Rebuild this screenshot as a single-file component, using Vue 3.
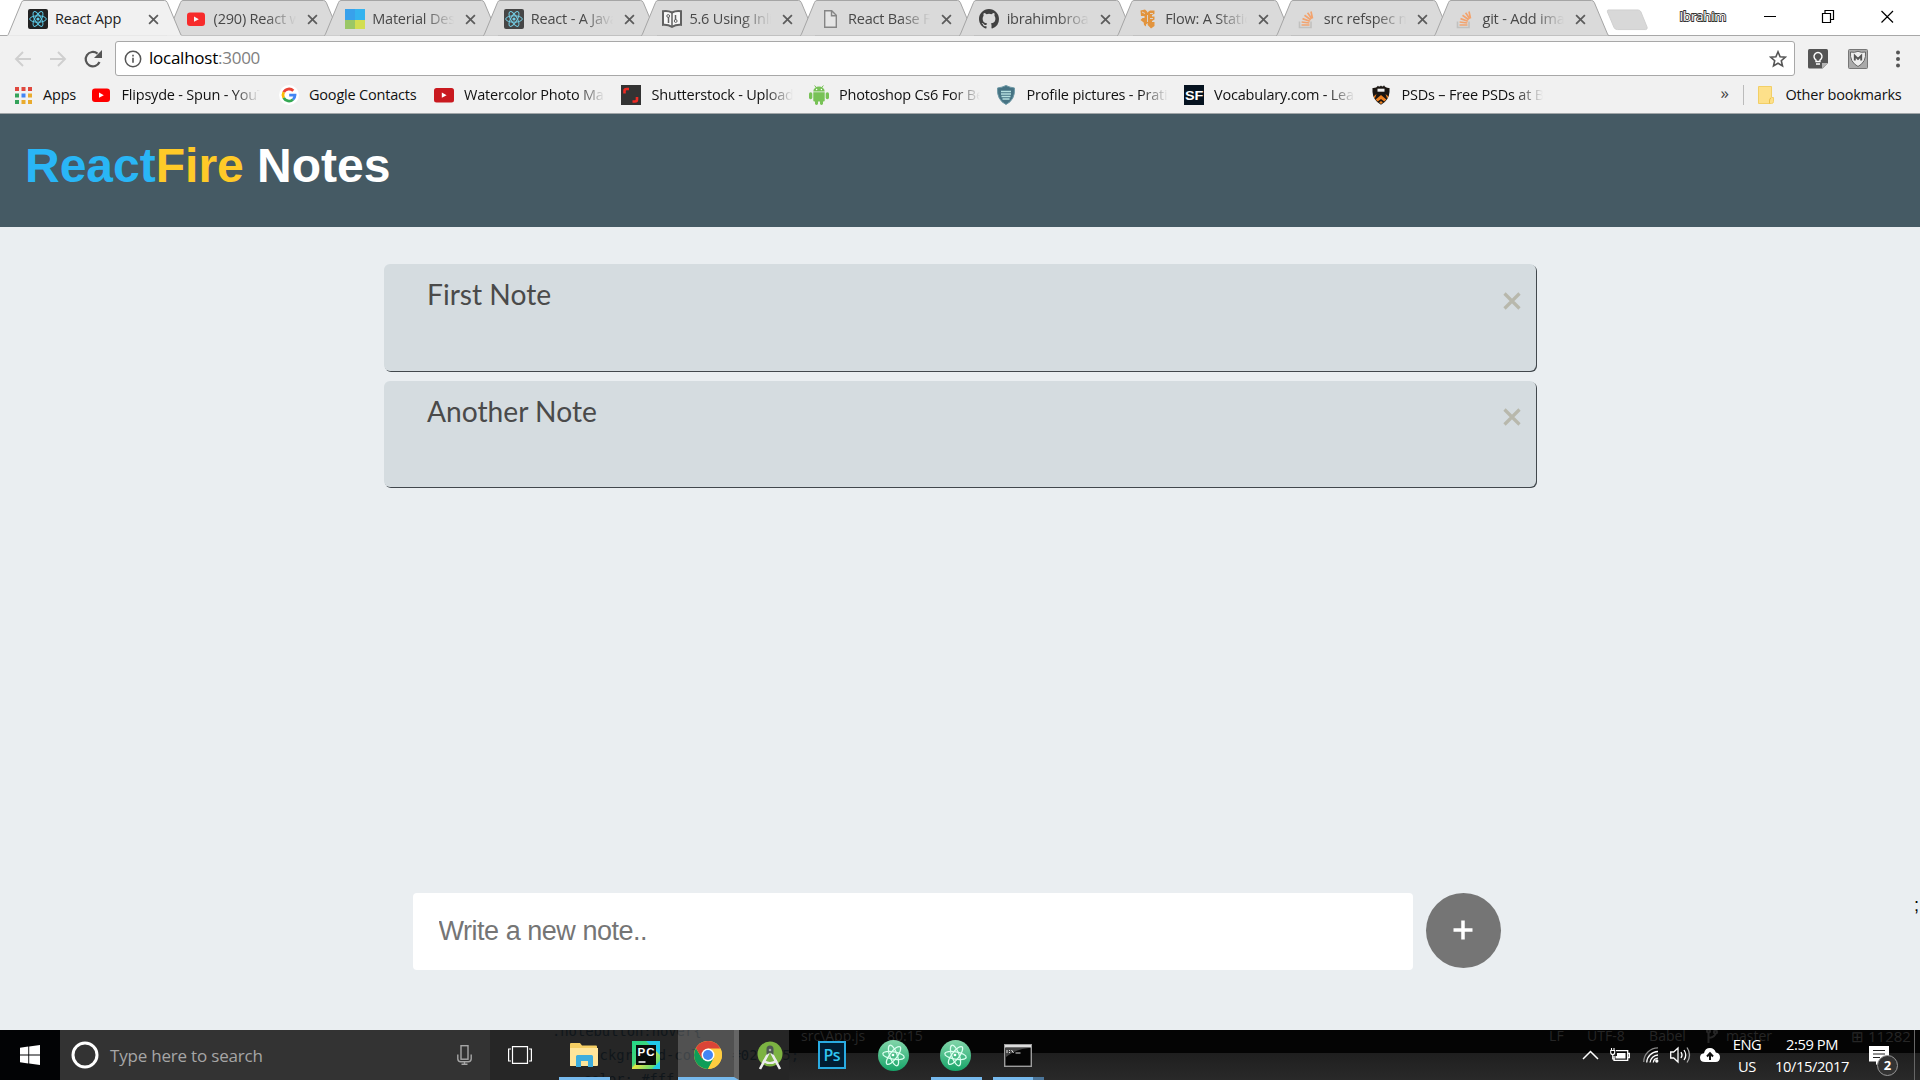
<script setup>
const tabs = [
  { title: 'React App', icon: 'react', active: true },
  { title: '(290) React websites', icon: 'youtube' },
  { title: 'Material Design', icon: 'material' },
  { title: 'React - A JavaScript', icon: 'reactdim' },
  { title: '5.6 Using Inline', icon: 'book' },
  { title: 'React Base Fiddle', icon: 'page' },
  { title: 'ibrahimbroachwala', icon: 'github' },
  { title: 'Flow: A Static Type', icon: 'flow' },
  { title: 'src refspec master', icon: 'stack' },
  { title: 'git - Add images', icon: 'stack' },
]

const bookmarks = [
  { title: 'Flipsyde - Spun - YouTube', icon: 'youtube', cls: 'first' },
  { title: 'Google Contacts', icon: 'google', cls: 'short' },
  { title: 'Watercolor Photo Manip', icon: 'youtubedark', cls: '' },
  { title: 'Shutterstock - Upload', icon: 'shutter', cls: '' },
  { title: 'Photoshop Cs6 For Begin', icon: 'android', cls: '' },
  { title: 'Profile pictures - Pratik', icon: 'shield', cls: '' },
  { title: 'Vocabulary.com - Learn', icon: 'sf', cls: '' },
  { title: 'PSDs – Free PSDs at Best', icon: 'tiger', cls: '' },
]

const notes = ['First Note', 'Another Note']
</script>

<template>
  <div class="screen">
    <svg class="defs" width="0" height="0">
      <symbol id="react" viewBox="0 0 20 20">
        <rect width="20" height="20" rx="2" fill="#222"/>
        <g fill="none" stroke="#5ccbe8" stroke-width="1">
          <ellipse cx="10" cy="10" rx="8.3" ry="3.2"/>
          <ellipse cx="10" cy="10" rx="8.3" ry="3.2" transform="rotate(60 10 10)"/>
          <ellipse cx="10" cy="10" rx="8.3" ry="3.2" transform="rotate(120 10 10)"/>
        </g>
        <circle cx="10" cy="10" r="1.6" fill="#5ccbe8"/>
      </symbol>
      <symbol id="youtube" viewBox="0 0 20 20">
        <rect x="1" y="3.5" width="18" height="13.5" rx="3" fill="#f00"/>
        <path d="M8 7.6v5.2l4.8-2.6z" fill="#fff"/>
      </symbol>
      <symbol id="youtubedark" viewBox="0 0 20 20">
        <rect x="0" y="3" width="20" height="14.5" rx="2.5" fill="#c9191f"/>
        <path d="M7.8 7.6v5.2l4.8-2.6z" fill="#fff"/>
      </symbol>
      <symbol id="material" viewBox="0 0 20 20">
        <path d="M0 0h10v11H0z" fill="#1093f0"/><path d="M10 0h10v11H10z" fill="#0baaf5"/>
        <path d="M0 11h10v9H0z" fill="#8bc34a"/><path d="M10 11h10v9H10z" fill="#d1e02f"/>
      </symbol>
      <symbol id="book" viewBox="0 0 20 20">
        <path d="M1 2.2q5-.8 9 1.3 4-2.1 9-1.3v13.6q-5-.4-9 2-4-2.4-9-2z" fill="#fff" stroke="#444" stroke-width="2"/>
        <path d="M10 3v14M6.5 8v6M13.5 6v5" stroke="#444" stroke-width="1.500"/>
        <circle cx="6.2" cy="7" r="1.400" fill="none" stroke="#444"/><circle cx="13.700" cy="12" r="1.400" fill="none" stroke="#444"/>
      </symbol>
      <symbol id="page" viewBox="0 0 20 20">
        <path d="M3.7 1.7h7l4.6 4.6v12H3.7zM10.5 1.7v5h5" fill="#e8e8e8" stroke="#707070" stroke-width="1.400"/>
      </symbol>
      <symbol id="github" viewBox="0 0 16 16">
        <path fill="#1c1c1c" d="M8 0C3.58 0 0 3.58 0 8c0 3.54 2.29 6.53 5.47 7.59.4.07.55-.17.55-.38 0-.19-.01-.82-.01-1.49-2.01.37-2.53-.49-2.69-.94-.09-.23-.48-.94-.82-1.13-.28-.15-.68-.52-.01-.53.63-.01 1.08.58 1.23.82.72 1.21 1.87.87 2.33.66.07-.52.28-.87.51-1.07-1.78-.2-3.64-.89-3.64-3.95 0-.87.31-1.59.82-2.15-.08-.2-.36-1.02.08-2.12 0 0 .67-.21 2.2.82a7.6 7.6 0 0 1 4 0c1.53-1.04 2.2-.82 2.2-.82.44 1.1.16 1.92.08 2.12.51.56.82 1.27.82 2.15 0 3.07-1.87 3.75-3.65 3.95.29.25.54.73.54 1.48 0 1.07-.01 1.93-.01 2.2 0 .21.15.46.55.38A8 8 0 0 0 16 8c0-4.42-3.58-8-8-8z"/>
      </symbol>
      <symbol id="flow" viewBox="0 0 20 20">
        <path fill="#e58318" d="M2.500 1.500L7 .500l2 2v1.200l3-2.200h4.500v3.200L14 6v1.500h2.500v3L14 12v1h2.500v4L13 19.500 9.700 16v-2L8 15.500v2l-2-1.500-.3-2.500L2.500 11l2-2h2V7H3z"/>
        <path d="M7 4.500L4 3M9.500 6v7M12 4.500h3M12 9.500h3" stroke="#dadada" stroke-width=".9"/>
      </symbol>
      <symbol id="stack" viewBox="0 0 20 20">
        <path d="M2.500 12.500v6h11.500v-6" fill="none" stroke="#bcbbb9" stroke-width="1.600"/>
        <path d="M4.500 16h8M4.600 13l7.800 1M5.500 9.600l7.300 2.600M7.500 6.200l6.200 4.600M10.600 3.800l4.200 6M14 2.500l1.500 7" stroke="#f99654" stroke-width="1.700"/>
      </symbol>
      <symbol id="google" viewBox="0 0 20 20">
        <circle cx="10" cy="10" r="10" fill="#fff"/>
        <g fill="none" stroke-width="2.800">
          <path d="M4.700 7.200A6 6 0 0 1 14.300 5.800" stroke="#ea4335"/>
          <path d="M4.700 12.800A6 6 0 0 1 4.700 7.200" stroke="#fbbc05"/>
          <path d="M14 14.500A6 6 0 0 1 4.700 12.800" stroke="#34a853"/>
          <path d="M10.200 10.200H16A6 6 0 0 1 14 14.500" stroke="#4285f4"/>
        </g>
      </symbol>
      <symbol id="shutter" viewBox="0 0 20 20">
        <rect width="20" height="20" fill="#333"/>
        <path d="M3.500 8.500V6q0-2 2-2H8M11.500 16.500H14q2 0 2-2V12" fill="none" stroke="#ee2b24" stroke-width="2.600"/>
      </symbol>
      <symbol id="android" viewBox="0 0 20 20">
        <g fill="#78c257"><path d="M4.300 6.500a5.700 4.900 0 0 1 11.400 0zM4.300 7.300h11.400v8.200q0 1-1 1H5.300q-1 0-1-1z"/>
        <rect x="0" y="7.200" width="3.300" height="7" rx="1.600"/><rect x="16.700" y="7.200" width="3.300" height="7" rx="1.600"/>
        <rect x="6" y="14" width="3" height="6" rx="1.400"/><rect x="11" y="14" width="3" height="6" rx="1.400"/></g>
        <path d="M5.600.5l2 2.500M14.400.5l-2 2.500" stroke="#78c257"/><circle cx="7.600" cy="4.500" r=".7" fill="#fff"/><circle cx="12.400" cy="4.500" r=".7" fill="#fff"/>
      </symbol>
      <symbol id="shield" viewBox="0 0 20 20">
        <path d="M10 .5Q14 2.500 18.500 3q.8 12-8.500 16.500Q.7 15 1.500 3 6 2.500 10 .5z" fill="#467383" stroke="#6d98a5"/>
        <path d="M5 6.500h10M5 9h10M5.500 11.500h9M6.500 14h7" stroke="#b5e0df" stroke-width="1.400"/>
      </symbol>
      <symbol id="sf" viewBox="0 0 20 20">
        <rect width="20" height="20" fill="#061320"/>
        <text x="10" y="14.500" text-anchor="middle" textLength="18" lengthAdjust="spacingAndGlyphs" font-family="Liberation Sans" font-weight="700" font-size="13" fill="#fff">SF</text>
      </symbol>
      <symbol id="tiger" viewBox="0 0 20 20">
        <path d="M1.500 3q4 .3 5.500-2.300Q8.500 2.600 10 .5q1.500 2.100 3-.2Q14.500 3.300 18.500 3v4q-.5 8.500-8.500 12.700Q2 15.500 1.500 7z" fill="#1b1612"/>
        <path d="M2.500 11.500L5.500 9 3.800 13.500zM17.500 11.500L14.500 9l1.700 4.500zM4.700 14.500L10 10l5.300 4.500-2 2L10 14l-3.300 2.500zM8.200 17.500L10 16l1.800 1.500L10 19z" fill="#ee8120"/>
        <path d="M6.500 3.700h7v3h-7z" fill="#eee"/>
      </symbol>
      <symbol id="atom" viewBox="0 0 30 30">
        <circle cx="15" cy="15" r="15" fill="url(#atomFill)"/>
        <g fill="none" stroke="#dbfff0" stroke-width="1.200">
          <ellipse cx="15" cy="15" rx="10.500" ry="3.600" transform="rotate(10 15 15)"/>
          <ellipse cx="15" cy="15" rx="10.500" ry="3.600" transform="rotate(70 15 15)"/>
          <ellipse cx="15" cy="15" rx="10.500" ry="3.600" transform="rotate(127 15 15)"/>
        </g><circle cx="14.500" cy="14.500" r="1.300" fill="#fff"/>
      </symbol>
      <linearGradient id="atomFill" x1="0" y1="0" x2="0" y2="1"><stop stop-color="#83d6aa"/><stop offset="1" stop-color="#16a468"/></linearGradient>
      <linearGradient id="pyFill" x1="0" y1="0" x2="1" y2="1"><stop stop-color="#21d789"/><stop offset=".45" stop-color="#48d578"/><stop offset=".5" stop-color="#e8e444"/><stop offset="1" stop-color="#21d789"/></linearGradient>
    </svg>

    <div class="tabstrip">
      <div v-for="(t, i) in tabs" :key="i" class="tab" :class="{ active: t.active }">
        <svg class="shape" viewBox="0 0 175 36" preserveAspectRatio="none">
          <path d="M0 35.500C1 35.500 1 35 1.500 34L14.500 2.500Q15.200.5 17 .5H157.500Q159.500.5 160.300 2.500L173.500 34Q174 35.500 175 35.500" :fill="t.active ? '#f1f1f1' : '#dadada'" stroke="#a5a5a5"/>
          <path v-if="t.active" d="M0.500 36H174.500" stroke="#f1f1f1" stroke-width="1.500"/>
        </svg>
        <svg class="fav"><use :href="'#' + (t.icon === 'reactdim' ? 'react' : t.icon)"/></svg>
        <span class="tabtitle">{{ t.title }}</span>
        <svg class="close" viewBox="0 0 10 10"><path d="M1 1l8 8M9 1L1 9" stroke="#5c5c5c" stroke-width="1.600"/></svg>
      </div>
      <svg class="newtab" viewBox="0 0 44 23"><path d="M2 1H33Q35 1 36 3L42.500 19Q43 21.500 41 21.500H11.500Q9 21.500 8 19.500L1 3Q.5 1 2 1z" fill="#d8d8d8" stroke="#cfcfcf"/></svg>
      <span class="user">Ibrahim</span>
      <svg class="winctl" width="136" height="20" viewBox="0 0 136 20" fill="none" stroke="#000">
        <path d="M0 9.500h12M58.500 6.500h8v9h-8zM61 6.500v-3h8.500v9H67M117.500 4l11.500 11.500M129 4l-11.500 11.500" stroke-width="1.200"/>
      </svg>
    </div>

    <div class="toolbar">
      <svg class="nav" width="104" height="36" viewBox="0 0 104 36" fill="none">
        <path d="M31 18H16M23 11l-7 7 7 7M50 18h15M58 11l7 7-7 7" stroke="#cfcfcf" stroke-width="1.900"/>
        <path d="M99.500 21A7.200 7.200 0 1 1 97.500 12.600" stroke="#555" stroke-width="2.200"/><path d="M102 9v8h-8z" fill="#555"/>
      </svg>
      <div class="omnibox">
        <svg width="18" height="18" viewBox="0 0 18 18"><circle cx="9" cy="9" r="7.700" fill="none" stroke="#555" stroke-width="1.500"/><path d="M9 7.800v5M9 4.800v1.700" stroke="#555" stroke-width="1.600"/></svg>
        <span class="url">localhost<i>:3000</i></span>
        <svg class="star" width="18" height="18" viewBox="0 0 18 18"><path d="M9 1.800l2.100 4.900 5.200.5-4 3.500 1.200 5.200L9 13.200l-4.500 2.700 1.200-5.200-4-3.500 5.200-.5z" fill="none" stroke="#555" stroke-width="1.600"/></svg>
      </div>
      <svg class="ext" width="20" height="20" viewBox="0 0 20 20"><path d="M1.500 0h17Q20 0 20 1.500V14l-5.500 5.500H1.500Q0 19.500 0 18V1.500Q0 0 1.500 0z" fill="#555"/><path d="M20 14l-6 5.500V14z" fill="#b5b5b5"/><path d="M8 12.500V11a4 4 0 1 1 4 0v1.500zM8 15h4" fill="none" stroke="#fff" stroke-width="1.400"/></svg>
      <svg class="ext2" width="20" height="20" viewBox="0 0 20 20"><rect x=".5" y=".5" width="19" height="19" rx="1" fill="#aaa" stroke="#777"/><path d="M2.500 3q4 1 7.500-.7Q13 4 17.500 3q1 10-7.500 14.500Q1.500 13 2.500 3z" fill="#eee" stroke="#666"/><path d="M6.800 11.500V6.800L10 10l3.200-3.200v4.700" fill="none" stroke="#555" stroke-width="1.900"/></svg>
      <svg width="6" height="18" viewBox="0 0 6 18" fill="#555"><circle cx="3" cy="2.500" r="2"/><circle cx="3" cy="9" r="2"/><circle cx="3" cy="15.500" r="2"/></svg>
    </div>

    <div class="bookmarks">
      <svg class="apps" width="17" height="17" viewBox="0 0 17 17">
        <path d="M0 0h4v4H0zM6.500 0h4v4h-4zM13 0h4v4h-4z" fill="#e0483e"/><path d="M0 6.500h4v4H0zM0 13h4v4H0z" fill="#35a35a"/>
        <path d="M6.500 6.500h4v4h-4z" fill="#4285f4"/><path d="M13 6.500h4v4h-4zM6.500 13h4v4h-4zM13 13h4v4h-4z" fill="#e9ab2e"/>
      </svg>
      <span class="appslabel">Apps</span>
      <div v-for="b in bookmarks" :key="b.title" class="bm" :class="b.cls">
        <svg width="20" height="20"><use :href="'#' + b.icon"/></svg><span>{{ b.title }}</span>
      </div>
      <span class="more">»</span>
      <div class="sep"></div>
      <svg class="folder" width="17" height="18" viewBox="0 0 17 18"><path d="M.5.500h13v11h2v4q0 2-2 2H.5z" fill="#fde08a" stroke="#f2cf66"/><path d="M13 12q-1.500 0-1.500 3v2.500" fill="none" stroke="#e9bf4b"/></svg>
      <span>Other bookmarks</span>
    </div>

    <header><h1><span class="blue">React</span><span class="gold">Fire</span> Notes</h1></header>
    <main>
      <div class="notes">
        <article v-for="n in notes" :key="n" class="note">
          <p>{{ n }}</p>
          <svg width="18" height="18" viewBox="0 0 18 18"><path d="M1.500 1.500l15 15M16.500 1.500l-15 15" stroke="#b8b8ac" stroke-width="3.200"/></svg>
        </article>
      </div>
      <form class="composer" @submit.prevent>
        <input placeholder="Write a new note..">
        <button type="submit" aria-label="Add"><svg width="20" height="20" viewBox="0 0 20 20"><path d="M10 .5v19M.5 10h19" stroke="#fff" stroke-width="3.500"/></svg></button>
        <span class="stray">;</span>
      </form>
    </main>

    <footer class="taskbar">
      <div class="ghost code"><span>.notebutton:hover{</span><span class="g2">background-color: #0288D5;</span><span class="g2">color: #fff;</span></div>
      <div class="ghost status"><span>src\App.js</span><span class="pos">80:15</span><span class="lf">LF</span><span class="utf">UTF-8</span><span class="bab">Babel</span>
        <svg width="12" height="16" viewBox="0 0 12 16" fill="none" stroke="#262626" stroke-width="2"><circle cx="2.500" cy="3" r="1.500"/><circle cx="9.500" cy="4" r="1.500"/><path d="M2.500 4v11M9.500 5q0 4-7 5"/></svg>
        <span class="mas">master</span><span class="ln">⊞ 11282</span></div>
      <div class="start"><svg width="20" height="20" viewBox="0 0 20 20" fill="#fff"><path d="M0 2.800l8.300-1.200v8H0zM9.200 1.500L20 0v9.600H9.200zM0 10.500h8.300v8L0 17.300zM9.200 10.500H20V20L9.200 18.600z"/></svg></div>
      <div class="search">
        <svg width="28" height="28" viewBox="0 0 28 28"><circle cx="14" cy="14" r="12" fill="none" stroke="#fff" stroke-width="3"/></svg>
        <span>Type here to search</span>
        <svg class="mic" width="15" height="20" viewBox="0 0 15 20" fill="none" stroke="#a6a6a6" stroke-width="1.400"><rect x="4" y=".7" width="7" height="13.500"/><path d="M.8 9.500v4.300q0 2.900 3 2.900h7.400q3 0 3-2.900V9.500M7.500 16.500V19M4.500 19.200h6"/></svg>
      </div>
      <div class="app taskview"><svg width="24" height="18" viewBox="0 0 24 18" fill="none" stroke="#fff" stroke-width="1.200"><path d="M4.500.6h15v16.800h-15zM3 3H.6v12H3M21 3h2.400v12H21"/></svg></div>
      <div class="app run"><svg width="28" height="26" viewBox="0 0 28 26"><path d="M0 2q0-1 1-1h9l2 2.500h14q1 0 1 1V24H0z" fill="#f5ce63"/><path d="M0 6h28v17q0 1-1 1H1q-1 0-1-1z" fill="#ffe59a"/><path d="M6 25V14.500q0-1.500 1.500-1.500h14q1.500 0 1.500 1.500V25h-5v-6h-7v6z" fill="#3eaddd"/></svg></div>
      <div class="app"><svg width="28" height="28" viewBox="0 0 28 28"><rect width="28" height="28" fill="url(#pyFill)"/><path d="M14 0h14v14zM20 28l8-8v8z" fill="#20c9e8"/><rect x="4" y="4" width="20" height="20" fill="#080b0a"/><text x="5.500" y="14.800" font-family="Liberation Sans" font-weight="700" font-size="11.500" textLength="17" fill="#fff">PC</text><path d="M6.500 21h7" stroke="#fff" stroke-width="1.500"/></svg></div>
      <div class="app current"><svg width="28" height="28" viewBox="0 0 28 28"><circle cx="14" cy="14" r="14" fill="#ffcd40"/><path d="M1.900 7A14 14 0 0 0 14 28l6-10.500L14 14 8 17.500z" fill="#0f9d58"/><path d="M14 7.500h12.400A14 14 0 0 1 14 28l5.600-10.700z" fill="#ffcd40"/><path d="M1.900 7A14 14 0 0 1 26.400 7.500H14L8 17.500z" fill="#db4437"/><circle cx="14" cy="14" r="6.500" fill="#fff"/><circle cx="14" cy="14" r="5" fill="#4285f4"/></svg></div>
      <div class="app studio"><svg width="26" height="29" viewBox="0 0 26 29"><circle cx="13" cy="13" r="12.500" fill="#7cb342"/><path d="M3 28L11.500 12M23 28L14.500 12" stroke="#ececec" stroke-width="2.600"/><path d="M6 19.500q7 5 14 0" fill="none" stroke="#ececec" stroke-width="2.200"/><path d="M9.500 14V8q0-3.500 3.500-3.500T16.500 8v6L13 11.500z" fill="#4d5852"/><circle cx="13" cy="9" r="1.300" fill="#aaa"/></svg></div>
      <div class="app ps"><svg width="28" height="28" viewBox="0 0 28 28"><rect x="1" y="1" width="26" height="26" fill="#001d33" stroke="#29abe2" stroke-width="2"/><text x="5.500" y="19.500" font-family="Open Sans" font-weight="600" font-size="16" textLength="17" fill="#31c5f0">Ps</text></svg></div>
      <div class="app"><svg width="31" height="31"><use href="#atom"/></svg></div>
      <div class="app run"><svg width="31" height="31"><use href="#atom"/></svg></div>
      <div class="app run cmd"><svg width="28" height="23" viewBox="0 0 28 23"><rect x=".7" y=".7" width="26.600" height="21.600" fill="#050505" stroke="#9d9d9d" stroke-width="1.400"/><path d="M1 1h26v2.500H1z" fill="#ddd"/><path d="M2 4h23Q12 5 2 13z" fill="#444"/><path d="M3 6v3M5.500 6v1M5.500 8v1M7.500 6l2 3M11.500 9h5" stroke="#ddd"/></svg></div>
      <div class="tray">
        <svg class="chev" width="17" height="10" viewBox="0 0 17 10"><path d="M1 9l7.500-7.500L16 9" fill="none" stroke="#fff" stroke-width="1.500"/></svg>
        <svg class="bat" width="20" height="14" viewBox="0 0 20 14"><path d="M6 2.700h11.700v9.600H4V8M18 5.500h1.500v4H18" fill="none" stroke="#fff" stroke-width="1.300"/><path d="M7 5h8.500v5.500H5.500V8H7z" fill="#fff"/><path d="M.7 2.500h4v2q0 2-2 2t-2-2zM1.500 0v2M4 0v2M2.700 6v5H5" fill="none" stroke="#fff" stroke-width="1.100"/></svg>
        <svg class="wifi" width="16" height="16" viewBox="0 0 16 16" fill="none" stroke="#fff" stroke-width="1.300"><path d="M.7 15A14.300 14.300 0 0 1 15 .8" stroke="#888"/><path d="M3.700 15.500A11.500 11.500 0 0 1 15 4.500M7 15.500a8.500 8.500 0 0 1 8-7.500"/><path d="M10.300 15.500a5 5 0 0 1 4.700-4.300"/><circle cx="13.800" cy="14" r="1" fill="#fff"/></svg>
        <svg class="vol" width="21" height="18" viewBox="0 0 21 18" fill="none" stroke="#fff" stroke-width="1.300"><path d="M.7 6h3L8 2v14l-4.300-4h-3zM11 6q2 3 0 6M14 4q3.500 5 0 10"/><path d="M17 1.500q5 7.500 0 15" stroke="#aaa"/></svg>
        <svg class="cloud" width="20" height="14" viewBox="0 0 20 14"><path d="M5 14Q0 14 0 9.500 0 5.800 4 5.200 5 0 10 0q4.500 0 5.800 4.500Q20 5 20 9.300q0 4.700-4.500 4.700z" fill="#fff"/><path d="M10 12V6M7 8.500L10 5.300l3 3.200" fill="none" stroke="#111" stroke-width="2"/></svg>
        <div class="stack lang"><span>ENG</span><span>US</span></div>
        <div class="stack clock"><span>2:59 PM</span><span>10/15/2017</span></div>
        <div class="action"><svg width="20" height="19" viewBox="0 0 20 19"><path d="M0 0h20v15.500h-9L7 19v-3.500H0z" fill="#fff"/><path d="M4 4.500h12M4 8h12M4 11.500h7" stroke="#222" stroke-width="1.100"/></svg><span class="badge">2</span></div>
      </div>
    </footer>
  </div>
</template>

<style>
body { margin: 0; overflow: hidden; }
</style>

<style scoped>
* { box-sizing: border-box; }
.screen { width: 1920px; height: 1080px; display: flex; flex-direction: column; background: #eaeef1; font-family: "Open Sans", "Noto Sans", sans-serif; overflow: hidden; }
svg { flex: none; display: block; }
.defs { position: absolute; }
.tabstrip { height: 36px; flex: none; display: flex; padding-left: 7px; background: linear-gradient(#a8a8a8, #a8a8a8) bottom / 100% 1px no-repeat #fff; }
.tab { position: relative; flex: none; width: 175px; height: 36px; margin-right: -16.400px; display: flex; align-items: center; padding: 2px 0 0 20.700px; font-size: 14.500px; color: #484848; }
.tab.active { z-index: 2; color: #222; }
.shape { position: absolute; inset: 0; width: 175px; height: 36px; overflow: visible; }
.fav { position: relative; width: 20px; height: 20px; }
.tab:not(.active) .fav { opacity: .8; }
.tabtitle { position: relative; width: 84px; margin-left: 7.300px; overflow: hidden; white-space: nowrap; letter-spacing: -.2px; line-height: 22px; -webkit-mask-image: linear-gradient(90deg, #000 62%, transparent 98%); mask-image: linear-gradient(90deg, #000 62%, transparent 98%); }
.active .tabtitle { -webkit-mask-image: none; mask-image: none; }
.close { position: relative; width: 11px; height: 11px; margin-left: 9px; }
.newtab { width: 43px; height: 22px; margin: 8.500px 0 0 12.500px; }
.user { margin: 5px 0 0 31px; width: 50px; font: 13px/22px "Open Sans", sans-serif; letter-spacing: -.1px; color: #fff; -webkit-text-stroke: 1.800px #333; paint-order: stroke fill; }
.winctl { margin: 7px 0 0 34.500px; }
.toolbar { height: 40px; flex: none; display: flex; align-items: center; background: #f1f1f1; padding-top: 5px; }
.nav { margin-right: 11px; }
.omnibox { width: 1680px; height: 35px; border: 1px solid #a8a8a8; border-radius: 3px; background: #fff; display: flex; align-items: center; padding: 0 7px 0 8px; }
.url { flex: 1; font-size: 17px; line-height: 24px; margin: -1px 0 0 7px; color: #000; letter-spacing: -.25px; }
.url i { font-style: normal; color: #808080; }
.ext { margin-left: 12.500px; }
.ext2 { margin: 0 27.500px 0 20px; }
.bookmarks { height: 38px; flex: none; display: flex; align-items: center; background: #f1f1f1; border-bottom: 1px solid #a0a5a8; padding-left: 14.500px; font-size: 14.500px; letter-spacing: -.2px; white-space: nowrap; color: #111; }
.apps { margin-top: 1px; }
.appslabel { width: 48px; margin-left: 11.500px; }
.bm { width: 187.500px; flex: none; display: flex; align-items: center; }
.bm span { width: 141px; margin-left: 10.500px; overflow: hidden; -webkit-mask-image: linear-gradient(90deg, #000 80%, transparent); mask-image: linear-gradient(90deg, #000 80%, transparent); }
.bm.first span { width: 138px; }
.bm.short { width: 155px; }
.bm.short span { width: 125px; -webkit-mask-image: none; mask-image: none; }
.more { width: 22px; margin-left: 162px; font-size: 17px; margin-top: -4px; color: #444; }
.sep { width: 1px; height: 20px; background: #bbb; margin-right: 14px; }
.folder { margin-right: 11px; }
header { height: 113px; flex: none; background: #455a64; padding: 24px 25px; }
h1 { margin: 0; font: bold 48px/56px "Liberation Sans", Arial, sans-serif; color: #fff; white-space: nowrap; }
.blue { color: #29b6f6; }
.gold { color: #ffca28; }
main { flex: 1; min-height: 0; display: flex; flex-direction: column; justify-content: space-between; }
.notes { width: 1152px; margin: 37px auto 0; display: flex; flex-direction: column; gap: 9.900px; }
.note { height: 106.700px; display: flex; justify-content: space-between; background: #d5dce0; border-radius: 6px; box-shadow: 1px 1px 0 #42484d; padding: 12px 15px 0 43px; }
.note p { margin: 0; font: 28.200px/36px Lato, sans-serif; color: #4a4a4a; }
.note svg { margin-top: 15.500px; }
.composer { display: flex; height: 77px; margin: 0 0 60px 413px; }
.composer input { width: 1000px; height: 77px; border: 0; border-radius: 4px; background: #fff; padding: 0 25.500px; font: 27px "Liberation Sans", Arial, sans-serif; letter-spacing: -.47px; }
.composer input::placeholder { color: #757575; opacity: 1; }
.composer button { width: 75px; height: 75px; padding: 0 1px 1px 0; margin-left: 13px; border: 0; border-radius: 50%; background: #757575; display: flex; align-items: center; justify-content: center; }
.stray { margin: 0 0 0 413px; font: 18px/24px "Liberation Sans", sans-serif; color: #000; }
.taskbar { position: relative; height: 50px; flex: none; display: flex; background: linear-gradient(#040404 23px, #1f1f1f 23px, #292929 50px) 789px 0 no-repeat #262626; color: #fff; overflow: hidden; }
.ghost { position: absolute; font-size: 17px; color: #10161b; white-space: pre; }
.code { left: 552px; top: -11px; font: 13.800px/24px "DejaVu Sans Mono", monospace; display: flex; flex-direction: column; }
.g2 { padding-left: 31px; }
.status { left: 801px; top: -6px; display: flex; line-height: 24px; font-size: 14px; color: #262626; align-items: center; }
.pos { margin-left: 22px; width: 662px; }
.lf { width: 38px; } .utf { width: 62px; } .bab { width: 57px; } .mas { margin-left: 8px; width: 125px; } .ln { font-size: 15px; }
.start { position: relative; width: 60px; background: #020305; padding: 15px 0 0 20px; }
.search { position: relative; width: 430px; background: #333; display: flex; align-items: center; padding-left: 11px; font-size: 17px; color: #a6a6a6; }
.search span { margin-left: 11px; width: 347px; letter-spacing: -.2px; }
.mic { margin: 0; }
.app { position: relative; width: 62px; display: flex; align-items: center; justify-content: center; }
.taskview { width: 60px; margin-right: 2.500px; }
.run::after { content: ""; position: absolute; left: 6.500px; bottom: 0; width: 51px; height: 3px; background: #76b9ed; }
.current { background: #ffffff33; border-bottom: 3px solid #76b9ed; margin-left: 1px; padding-top: 3px; width: 61px; border-right: 5px solid #666; padding-left: 4px; }
.cmd::after { background: linear-gradient(90deg, #76b9ed 40px, #4c769a 40px); }
.tray { display: flex; align-items: center; position: absolute; left: 1582px; top: 0; height: 50px; width: 333px; border-right: 1px solid #666; }
.bat { margin-left: 11px; } .wifi { margin-left: 13px; } .vol { margin-left: 11px; } .cloud { margin-left: 9px; }
.stack { display: flex; flex-direction: column; align-items: center; font-size: 14.700px; line-height: 22px; letter-spacing: -.4px; padding-bottom: 1px; }
.lang { width: 36px; margin-left: 9px; }
.clock { width: 84px; margin-left: 5px; }
.action { position: relative; margin: 0 0 0 15px; }
.badge { position: absolute; left: 8px; top: 9px; width: 21px; height: 21px; border: 1px solid #999; border-radius: 50%; background: #333; text-align: center; font: 700 13px/19px "Open Sans"; }
</style>
